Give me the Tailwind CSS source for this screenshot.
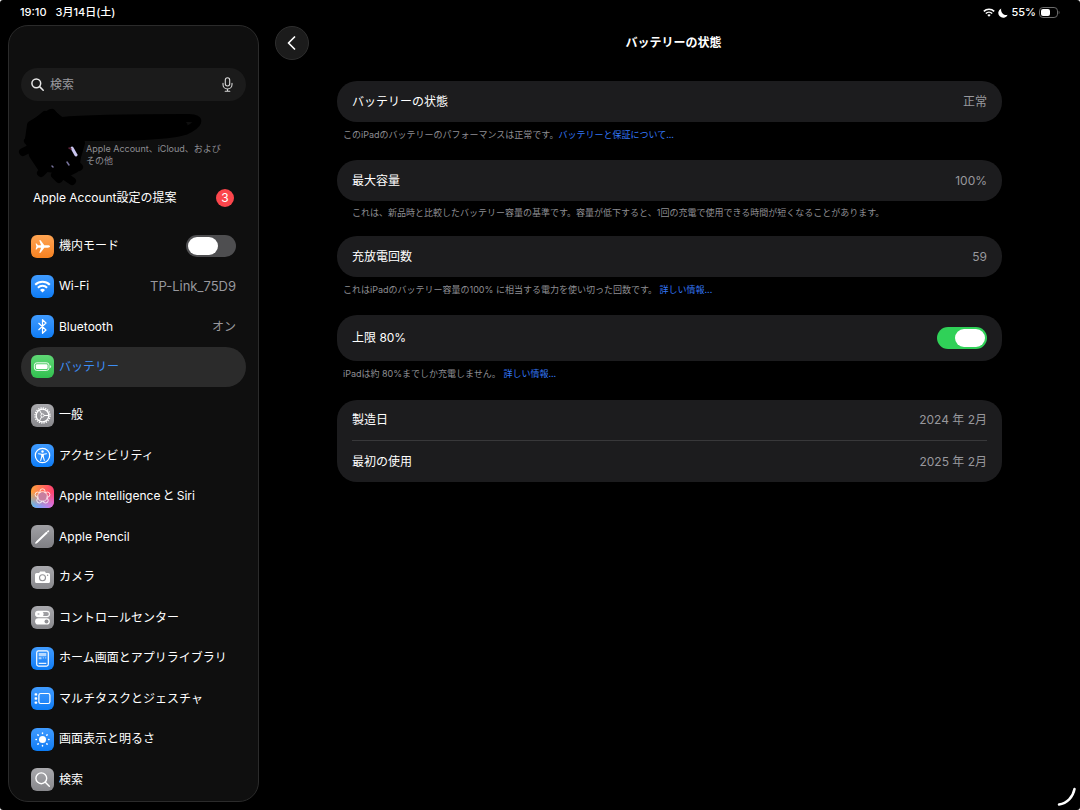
<!DOCTYPE html>
<html lang="ja">
<head>
  <meta charset="UTF-8" />
  <meta name="viewport" content="width=device-width, initial-scale=1.0" />
  <title>バッテリーの状態</title>
  <script src="https://cdn.jsdelivr.net/npm/@tailwindcss/browser@4"></script>
</head>
<body class="bg-white font-['Inter','Noto_Sans_CJK_JP',sans-serif] text-xs text-white">

  <div class="relative flex h-screen flex-col overflow-hidden rounded-[3px] bg-black">

    <!-- Status bar -->
    <div class="flex h-[25px] shrink-0 items-center justify-between pr-5 pl-5 text-[11px] font-medium">
      <div class="flex gap-[9px]">
        <span>19:10</span>
        <span>3月14日(土)</span>
      </div>
      <div class="flex items-center gap-[3px]">
        <svg class="h-[9px] w-3" viewBox="0 0 12 9" fill="none" stroke="#fff" stroke-width="1.6"><path d="M.8 3.4a7.4 7.4 0 0 1 10.4 0M2.8 5.5a4.6 4.6 0 0 1 6.4 0" /><path d="M6 8.8 4.3 7.1a2.4 2.4 0 0 1 3.4 0z" fill="#fff" stroke="none" /></svg>
        <svg class="h-[10px] w-[10px]" viewBox="0 0 10 10" fill="#fff"><path d="M3.200.4A4.900 4.900 0 1 0 9.700 6.800C6 7.800 2.300 4.600 3.200.4z" /></svg>
        <span>55%</span>
        <svg class="h-[11px] w-[21px]" viewBox="0 0 21 11"><rect x=".5" y=".5" width="18" height="10" rx="3.4" fill="none" stroke="#6b6b6b" /><path d="M19.7 3.8c1.1.5 1.1 2.9 0 3.4z" fill="#6b6b6b" /><rect x="2" y="2" width="9" height="7" rx="2" fill="#fff" /></svg>
      </div>
    </div>

    <div class="flex min-h-0 flex-1">

      <!-- Sidebar -->
      <aside class="mb-2 ml-2 flex w-[251px] shrink-0 flex-col rounded-[20px] border border-[#2b2b2b] bg-[#0f0f0f] px-3 pt-[42px] pb-px">
        <div class="flex h-[33px] shrink-0 items-center gap-[6px] rounded-full bg-[#1b1b1b] pr-3 pl-[10px]">
          <svg class="h-[13px] w-[13px] shrink-0" viewBox="0 0 13 13" fill="none" stroke="#e8e8e8" stroke-width="1.5" stroke-linecap="round"><circle cx="5.3" cy="5.3" r="4.4" /><path d="m8.6 8.6 3.6 3.6" /></svg>
          <input type="search" placeholder="検索" aria-label="検索" class="min-w-0 flex-1 bg-transparent outline-none placeholder:text-[#9a9a9f]" />
          <button type="button" aria-label="音声入力">
            <svg class="h-[15px] w-[13px]" viewBox="0 0 13 15" fill="none" stroke="#d8d8d8" stroke-width="1.1" stroke-linecap="round"><rect x="4.3" y=".8" width="4.4" height="8.2" rx="2.2" /><path d="M2 6.3v1.2a4.5 4.5 0 0 0 9 0V6.3M6.5 12v2M4.2 14.2h4.6" /></svg>
          </button>
        </div>

        <a href="#account" class="relative block h-[76px] shrink-0 pt-[42px] pl-[65px] text-[9px] leading-3 text-[#8e8e93]">
          <span class="block">Apple Account、iCloud、および<br />その他</span>
          <svg class="absolute top-0 left-0 h-[86px] w-[190px] overflow-visible" viewBox="0 0 190 86" fill="none" stroke="#000" stroke-linecap="round" stroke-linejoin="round" aria-hidden="true">
            <path d="M10 24 20 18l10-6 10 8 16 4 4 18-4 14-2 12-8 4-12-4-14-2-8-12-4-16z" fill="#000" stroke-width="8" />
            <path d="M2 51 16 44M7 40l6-4M12 24l12-10M31 12l6 8M20 72l8-8M42 74l9 6M34 74l4 4M54 62l4 4" stroke-width="8" />
            <path d="M40 20c30-3 90-3 128-3 13 0 10 7-4 13-20 6-64 6-112 6" stroke-width="8" />
            <path d="M54 26h106" stroke-width="14" />
            <path d="m51 47 4 7" stroke="#c9c6f0" stroke-width="3" />
            <path d="m46 61 2 3M31 65l1 1" stroke="#77739c" stroke-width="1.5" />
            <path d="m48 47 2 1" stroke="#5c2238" stroke-width="1.5" />
          </svg>
        </a>

        <a href="#suggestions" class="flex h-[41px] shrink-0 items-center justify-between pr-3 pl-3">
          <span>Apple Account設定の提案</span>
          <span class="flex h-[18px] w-[18px] items-center justify-center rounded-full bg-[#fb464c]">3</span>
        </a>

        <nav class="mt-2 flex min-h-0 flex-1 flex-col gap-2">
          <div class="grid h-[161px] shrink-0 grid-rows-4">
            <div class="flex items-center gap-[5px] px-[10px]">
              <svg class="h-[23px] w-[23px] rounded-[6px] bg-linear-to-b from-[#ffa552] to-[#f5811f]" viewBox="0 0 23 23" fill="#fff"><path d="M19 11.5c0-.7-1-1.2-2.2-1.2h-3.5L9.6 5.2H8.2l1.9 5.1H7L5.6 8.500h-1l.8 3-.8 3h1L7 12.700h3.100l-1.900 5.100h1.400l3.700-5.100h3.500c1.200 0 2.200-.5 2.200-1.200z" /></svg>
              <label for="airplane" class="flex-1">機内モード</label>
              <input id="airplane" type="checkbox" role="switch" class="relative h-[22px] w-[50px] appearance-none rounded-full bg-[#4e4e50] before:absolute before:top-[2px] before:left-[2px] before:h-[18px] before:w-[30px] before:rounded-full before:bg-white before:content-['']" />
            </div>
            <a href="#wifi" class="flex items-center gap-[5px] px-[10px]">
              <svg class="h-[23px] w-[23px] rounded-[6px] bg-linear-to-b from-[#3f9bff] to-[#0a7cf5]" viewBox="0 0 23 23" fill="none" stroke="#fff" stroke-width="2"><path d="M4.2 9.8a10.4 10.4 0 0 1 14.6 0M6.9 12.7a6.6 6.6 0 0 1 9.2 0" /><path d="M11.5 17.500 9 15a3.600 3.600 0 0 1 5 0z" fill="#fff" stroke="none" /></svg>
              <span class="flex-1">Wi-Fi</span>
              <span class="text-[13px] text-[#98989d]">TP-Link_75D9</span>
            </a>
            <a href="#bluetooth" class="flex items-center gap-[5px] px-[10px]">
              <svg class="h-[23px] w-[23px] rounded-[6px] bg-linear-to-b from-[#3f9bff] to-[#0a7cf5]" viewBox="0 0 23 23" fill="none" stroke="#fff" stroke-width="1.2" stroke-linejoin="round"><path d="m7.500 8 7.500 7-3.500 3.300V4.700L15 8l-7.500 7" /></svg>
              <span class="flex-1">Bluetooth</span>
              <span class="text-[#98989d]">オン</span>
            </a>
            <a href="#battery" aria-current="page" class="flex items-center gap-[5px] rounded-full bg-[#2b2b2b] px-[10px] text-[#3d8ef5]">
              <svg class="h-[23px] w-[23px] rounded-[6px] bg-linear-to-b from-[#5fd775] to-[#30c04f]" viewBox="0 0 23 23"><rect x="3.4" y="7.8" width="14.6" height="7.6" rx="2.4" fill="none" stroke="#fff" stroke-width=".9" /><rect x="4.8" y="9.2" width="11.8" height="4.8" rx="1.2" fill="#fff" /><path d="M19.2 10.2c1.3.4 1.3 2.4 0 2.8z" fill="#fff" /></svg>
              <span>バッテリー</span>
            </a>
          </div>

          <div class="grid min-h-0 flex-1 auto-rows-fr">
            <a href="#general" class="flex items-center gap-[5px] px-[10px]">
              <svg class="h-[23px] w-[23px] rounded-[6px] bg-linear-to-b from-[#a9a9ad] to-[#88888c]" viewBox="0 0 23 23" fill="none" stroke="#fff"><circle cx="11.5" cy="11.5" r="7.5" stroke-width="1.4" stroke-dasharray="1.3 1.06" /><circle cx="11.5" cy="11.5" r="6.3" stroke-width="1.3" /><circle cx="11.5" cy="11.5" r="1.6" /><path d="M13 11.5h4.8M10.7 10.2 8.4 6.1M10.7 12.8l-2.3 4.1" /></svg>
              <span>一般</span>
            </a>
            <a href="#accessibility" class="flex items-center gap-[5px] px-[10px]">
              <svg class="h-[23px] w-[23px] rounded-[6px] bg-linear-to-b from-[#3f9bff] to-[#0a7cf5]" viewBox="0 0 23 23" fill="none" stroke="#fff" stroke-linecap="round" stroke-linejoin="round"><circle cx="11.5" cy="11.5" r="7.2" stroke-width="1.2" /><circle cx="11.5" cy="7.5" r="1.2" fill="#fff" stroke="none" /><path d="m7.6 9.7 2.9.6h2l2.9-.6M10.7 10.5v2.3l-1 3.6M12.3 10.5v2.3l1 3.6M11.5 10.3v2.5" stroke-width="1.1" /></svg>
              <span>アクセシビリティ</span>
            </a>
            <a href="#siri" class="flex items-center gap-[5px] px-[10px]">
              <svg class="h-[23px] w-[23px] rounded-[6px]" viewBox="0 0 23 23" fill="none">
                <defs>
                  <linearGradient id="ai-top"><stop stop-color="#ffa23c" /><stop offset="1" stop-color="#ff3f74" /></linearGradient>
                  <linearGradient id="ai-bottom"><stop stop-color="#4fbcff" /><stop offset="1" stop-color="#e070e8" /></linearGradient>
                  <linearGradient id="ai-fade" x2="0" y2="1"><stop offset=".3" stop-color="#000" /><stop offset=".95" stop-color="#fff" /></linearGradient>
                  <mask id="ai-mask"><path d="M0 0h23v23H0z" fill="url(#ai-fade)" /></mask>
                </defs>
                <path d="M0 0h23v23H0z" fill="url(#ai-top)" />
                <path d="M0 0h23v23H0z" fill="url(#ai-bottom)" mask="url(#ai-mask)" />
                <circle cx="11.5" cy="11.5" r="4" fill="#a07fae" opacity=".6" />
                <g stroke="#fff" stroke-width=".9" opacity=".9">
                  <circle cx="11.5" cy="11.5" r="4.8" />
                  <circle cx="11.5" cy="6.4" r="2.6" />
                  <circle cx="16.3" cy="9.6" r="2.6" />
                  <circle cx="14.6" cy="15.4" r="2.6" />
                  <circle cx="8.4" cy="15.4" r="2.6" />
                  <circle cx="6.7" cy="9.6" r="2.6" />
                </g>
                <circle cx="11.5" cy="11.5" r="4" fill="#c77fa0" />
              </svg>
              <span>Apple Intelligence&thinsp;と&thinsp;Siri</span>
            </a>
            <a href="#pencil" class="flex items-center gap-[5px] px-[10px]">
              <svg class="h-[23px] w-[23px] rounded-[6px] bg-linear-to-b from-[#a0a0a4] to-[#7f7f84]" viewBox="0 0 23 23" fill="none" stroke="#fff" stroke-linecap="round"><path d="m6.2 16.8 9.4-9" stroke-width="1.9" /><path d="m4.9 18 .8-.8M16.8 6.6l.6-.5" stroke-width="1.6" /></svg>
              <span>Apple Pencil</span>
            </a>
            <a href="#camera" class="flex items-center gap-[5px] px-[10px]">
              <svg class="h-[23px] w-[23px] rounded-[6px] bg-linear-to-b from-[#a9a9ad] to-[#88888c]" viewBox="0 0 23 23"><path d="M5.6 7h2.500l1-1.600h4.800l1 1.600h2.500a1.600 1.600 0 0 1 1.600 1.600v6.800a1.600 1.600 0 0 1-1.600 1.600H5.600A1.600 1.600 0 0 1 4 15.400V8.600A1.600 1.600 0 0 1 5.600 7z" fill="#fff" /><circle cx="11.5" cy="11.7" r="3" fill="none" stroke="#929296" stroke-width="1.1" /><circle cx="16.6" cy="9.3" r=".7" fill="#929296" /></svg>
              <span>カメラ</span>
            </a>
            <a href="#control-center" class="flex items-center gap-[5px] px-[10px]">
              <svg class="h-[23px] w-[23px] rounded-[6px] bg-linear-to-b from-[#a9a9ad] to-[#88888c]" viewBox="0 0 23 23"><rect x="4.6" y="5.4" width="13.8" height="5.2" rx="2.6" fill="none" stroke="#fff" stroke-width="1.1" /><rect x="4.6" y="5.4" width="8" height="5.2" rx="2.6" fill="#fff" /><rect x="4.1" y="12.3" width="14.8" height="6.2" rx="3.1" fill="#fff" /><circle cx="15.5" cy="15.4" r="2" fill="#929296" /><circle cx="7.5" cy="8" r="1.1" fill="#c4c4c7" /></svg>
              <span>コントロールセンター</span>
            </a>
            <a href="#home-screen" class="flex items-center gap-[5px] px-[10px]">
              <svg class="h-[23px] w-[23px] rounded-[6px] bg-linear-to-b from-[#3f9bff] to-[#0a7cf5]" viewBox="0 0 23 23" fill="#fff"><rect x="5.7" y="3.9" width="11.6" height="15.2" rx="1.8" fill="none" stroke="#fff" stroke-width="1.2" /><path d="M7.7 6h7.6v3.2H7.700zM7.700 10.200h2.800v2H7.700z" opacity=".65" /><path d="M11.7 10.2h1.4v1.4h-1.400zM14 10.200h1.300v1.400H14z" opacity=".5" /><path d="M7.7 15.8h7.6V17H7.700z" opacity=".9" /></svg>
              <span>ホーム画面とアプリライブラリ</span>
            </a>
            <a href="#multitasking" class="flex items-center gap-[5px] px-[10px]">
              <svg class="h-[23px] w-[23px] rounded-[6px] bg-linear-to-b from-[#3f9bff] to-[#0a7cf5]" viewBox="0 0 23 23" fill="#fff"><rect x="7.9" y="6.5" width="11" height="10" rx="1.8" fill="none" stroke="#fff" stroke-width="1.2" /><rect x="3.6" y="6.2" width="2.6" height="2.4" rx=".7" /><rect x="3.6" y="10.3" width="2.6" height="2.4" rx=".7" /><rect x="3.6" y="14.4" width="2.6" height="2.4" rx=".7" /></svg>
              <span>マルチタスクとジェスチャ</span>
            </a>
            <a href="#display" class="flex items-center gap-[5px] px-[10px]">
              <svg class="h-[23px] w-[23px] rounded-[6px] bg-linear-to-b from-[#3f9bff] to-[#0a7cf5]" viewBox="0 0 23 23" fill="none" stroke="#fff" stroke-width="1.5" stroke-linecap="round"><circle cx="11.5" cy="11.5" r="3.5" fill="#fff" stroke="none" /><path d="M11.5 5v.4M11.5 17.6v.4M5 11.5h.4M17.6 11.5h.4M6.9 6.9l.3.3M15.8 15.8l.3.3M6.9 16.1l.3-.3M15.8 7.2l.3-.3" /></svg>
              <span>画面表示と明るさ</span>
            </a>
            <a href="#search" class="flex items-center gap-[5px] px-[10px]">
              <svg class="h-[23px] w-[23px] rounded-[6px] bg-linear-to-b from-[#a9a9ad] to-[#88888c]" viewBox="0 0 23 23" fill="none" stroke="#fff" stroke-width="1.4" stroke-linecap="round"><circle cx="10.3" cy="10.3" r="5.4" /><path d="m14.3 14.3 4 4" /></svg>
              <span>検索</span>
            </a>
          </div>
        </nav>
      </aside>

      <!-- Battery health -->
      <main class="min-w-0 flex-1 overflow-hidden">
        <header class="grid h-9 grid-cols-[34px_1fr_34px] items-center pr-2 pl-4">
          <button type="button" aria-label="戻る" class="flex h-[34px] w-[34px] items-center justify-center rounded-full border border-[#2e2e2e] bg-[#1b1b1b]">
            <svg class="h-[14px] w-[11px]" viewBox="0 0 11 14" fill="none" stroke="#fff" stroke-width="1.7" stroke-linecap="round" stroke-linejoin="round"><path d="M7.500 1 1.500 7l6 6" /></svg>
          </button>
          <h1 class="text-center font-semibold">バッテリーの状態</h1>
        </header>

        <div class="mx-auto mt-5 max-w-[665px]">
          <div class="flex h-[41px] items-center justify-between rounded-[20px] bg-[#1c1c1e] px-[15px]">
            <span>バッテリーの状態</span>
            <span class="text-[#98989d]">正常</span>
          </div>
          <p class="mt-[5px] mb-[17px] px-[6px] text-[9px] leading-4 text-[#8e8e93]">このiPadのバッテリーのパフォーマンスは正常です。<a href="#warranty" class="text-[#3478f6]">バッテリーと保証について...</a></p>

          <div class="flex h-[41px] items-center justify-between rounded-[20px] bg-[#1c1c1e] px-[15px]">
            <span>最大容量</span>
            <span class="text-[#98989d]">100%</span>
          </div>
          <p class="mt-1 mb-[15px] px-[15px] text-[9px] leading-4 text-[#8e8e93]">これは、新品時と比較したバッテリー容量の基準です。容量が低下すると、1回の充電で使用できる時間が短くなることがあります。</p>

          <div class="flex h-[41px] items-center justify-between rounded-[20px] bg-[#1c1c1e] px-[15px]">
            <span>充放電回数</span>
            <span class="text-[#98989d]">59</span>
          </div>
          <p class="mt-[5px] mb-[17px] px-[6px] text-[9px] leading-4 text-[#8e8e93]">これはiPadのバッテリー容量の100% に相当する電力を使い切った回数です。 <a href="#cycle-count" class="text-[#3478f6]">詳しい情報...</a></p>

          <div class="flex h-[46px] items-center justify-between rounded-[20px] bg-[#1c1c1e] px-[15px]">
            <label for="limit">上限 80%</label>
            <input id="limit" type="checkbox" role="switch" checked class="relative h-[22px] w-[50px] appearance-none rounded-full bg-[#30d158] before:absolute before:top-[2px] before:right-[2px] before:h-[18px] before:w-[30px] before:rounded-full before:bg-white before:content-['']" />
          </div>
          <p class="mt-[5px] mb-[18px] px-[6px] text-[9px] leading-4 text-[#8e8e93]">iPadは約 80%までしか充電しません。 <a href="#charge-limit" class="text-[#3478f6]">詳しい情報...</a></p>

          <dl class="rounded-[20px] bg-[#1c1c1e] px-[15px]">
            <div class="flex h-[41px] items-center justify-between border-b border-[#38383a]">
              <dt>製造日</dt>
              <dd class="text-[#98989d]">2024 年 2月</dd>
            </div>
            <div class="flex h-[41px] items-center justify-between">
              <dt>最初の使用</dt>
              <dd class="text-[#98989d]">2025 年 2月</dd>
            </div>
          </dl>
        </div>
      </main>
    </div>

    <!-- Corner gesture mark -->
    <svg class="absolute right-1 bottom-1 h-[18px] w-[18px] overflow-visible" viewBox="0 0 18 18" fill="none" stroke="#fff" stroke-width="2.5" stroke-linecap="round" aria-hidden="true"><path d="M1 16.5C9 15.5 15 9 16.5 1" /></svg>
  </div>

</body>
</html>
